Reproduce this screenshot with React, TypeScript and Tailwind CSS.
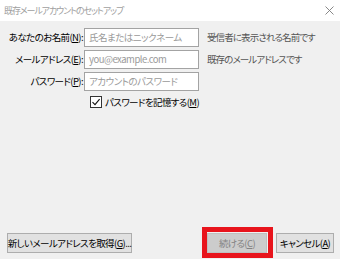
import React from "react";

const font = "font-['Noto_Sans_CJK_JP',sans-serif] [font-feature-settings:'palt'] whitespace-nowrap";

function Field({ label, keyChar, placeholder, hint }: { label: string; keyChar: string; placeholder: string; hint?: string }) {
    return (
        <div className="flex h-[19px] items-center">
            <div className="w-[84px] shrink-0 pr-[1px] text-right text-[9.5px] tracking-[-0.6px] text-black">
                {label}(<span className="underline">{keyChar}</span>):
            </div>
            <div className="flex h-[19px] w-[115px] shrink-0 items-center border border-[#a3a3a3] bg-white px-[4px] text-[9.5px] tracking-[-0.5px] text-[#9a9a9a]">
                {placeholder}
            </div>
            {hint && <div className="ml-[8px] text-[9.5px] tracking-[-0.9px] text-[#555]">{hint}</div>}
        </div>
    );
}

function Btn({ children, className = "" }: { children: React.ReactNode; className?: string }) {
    return (
        <div className={`flex h-[20px] items-center justify-center border text-[9.5px] tracking-[-0.6px] ${className}`}>
            {children}
        </div>
    );
}

export default function App() {
    return (
        <div className={`flex h-[259px] w-[340px] flex-col overflow-hidden bg-[#f0f0f0] ${font}`}>
            <div className="flex h-[21px] shrink-0 items-center justify-between bg-white pl-[4px] pr-[6px]">
                <span className="text-[9px] tracking-[-1.1px] text-[#a0a0a0]">既存メールアカウントのセットアップ</span>
                <svg width="9" height="9" viewBox="0 0 9 9" className="mb-[1px]">
                    <path d="M0.5 0.5 L8.5 8.5 M8.5 0.5 L0.5 8.5" stroke="#7a7a7a" strokeWidth="0.9" fill="none" />
                </svg>
            </div>

            <div className="flex flex-1 flex-col">
                <div className="flex flex-col gap-[3px] pt-[7px]">
                    <Field label="あなたのお名前" keyChar="N" placeholder="氏名またはニックネーム" hint="受信者に表示される名前です" />
                    <Field label="メールアドレス" keyChar="E" placeholder="you@example.com" hint="既存のメールアドレスです" />
                    <Field label="パスワード" keyChar="P" placeholder="アカウントのパスワード" />
                </div>

                <div className="mt-[4px] flex items-center pl-[90px]">
                    <div className="flex h-[12px] w-[12px] items-center justify-center border border-[#333] bg-white">
                        <svg width="10" height="10" viewBox="0 0 10 10">
                            <path d="M1.5 5.2 L4 7.6 L8.6 2.2" stroke="#111" strokeWidth="1.1" fill="none" />
                        </svg>
                    </div>
                    <span className="ml-[3px] text-[9.5px] tracking-[-0.6px] text-black">
                        パスワードを記憶する(<span className="underline">M</span>)
                    </span>
                </div>

                <div className="mt-auto flex items-center pb-[6px] pl-[7px] pr-[6px]">
                    <Btn className="w-[125px] border-[#adadad] bg-[#e1e1e1] text-black">
                        新しいメールアドレスを取得(<span className="underline">G</span>)...
                    </Btn>
                    <div className="relative ml-auto">
                        <Btn className="w-[60px] border-[#bfbfbf] bg-[#cccccc] text-[#838383]">
                            続ける(<span className="underline">C</span>)
                        </Btn>
                        <div className="absolute -bottom-[5px] -left-[5px] -right-[6px] -top-[6px] border-[5px] border-[#e8141c]" />
                    </div>
                    <Btn className="ml-[9px] w-[58px] border-[#adadad] bg-[#e1e1e1] text-black">
                        キャンセル(<span className="underline">A</span>)
                    </Btn>
                </div>
            </div>
        </div>
    );
}
